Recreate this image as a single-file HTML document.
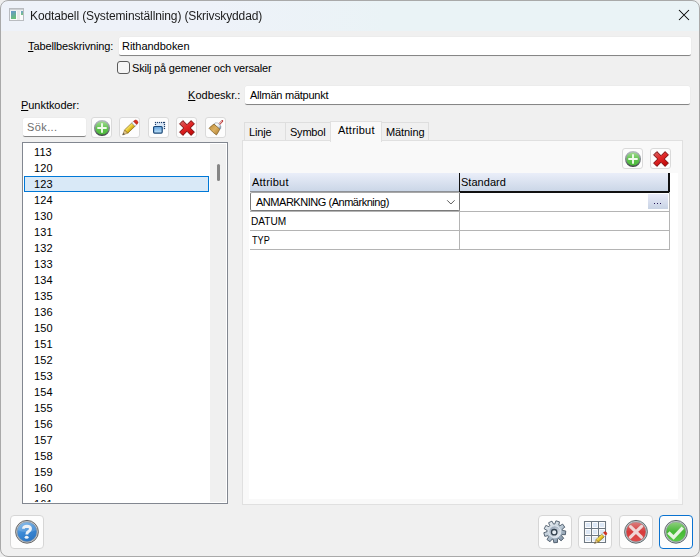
<!DOCTYPE html>
<html><head><meta charset="utf-8">
<style>
*{box-sizing:border-box;margin:0;padding:0}
html,body{width:700px;height:557px;overflow:hidden;background:#eeeeee}
body{font-family:"Liberation Sans",sans-serif;font-size:11px;color:#000;position:relative}
.a{position:absolute}
.t{position:absolute;white-space:pre;line-height:14px;color:#000}
#win{position:absolute;left:0;top:0;width:700px;height:557px;border-radius:8px;background:#f0f0f0;overflow:hidden}
#bord{position:absolute;left:0;top:0;width:700px;height:557px;border:1px solid #a9a9a9;border-radius:8px;pointer-events:none}
#title{position:absolute;left:0;top:0;width:700px;height:31px;background:linear-gradient(90deg,#eef2f9 0%,#eef2f9 30%,#eaf3f6 55%,#eaf3f6 100%)}
.tb{position:absolute;background:#fff;border-radius:2px;border-bottom:1px solid #868686;box-shadow:0 0 0 0.5px #e8e8e8}
.btn{position:absolute;width:21px;height:21px;border:1px solid #dadada;border-radius:3px;background:#fdfdfd}
.bbtn{position:absolute;width:34px;height:34px;border:1px solid #d6d6d6;border-radius:4px;background:#fdfdfd}
.u{text-decoration:underline;text-underline-offset:1px}
.tab{position:absolute;border:1px solid #dedede;border-bottom:none;background:#f0f0f0}
</style></head>
<body>
<svg width="0" height="0" style="position:absolute">
 <defs>
  <linearGradient id="gGreen" x1="0" y1="0" x2="0" y2="1"><stop offset="0" stop-color="#a8dc98"/><stop offset="0.5" stop-color="#62c452"/><stop offset="1" stop-color="#48b836"/></linearGradient>
  <linearGradient id="gRing" x1="0" y1="0" x2="0" y2="1"><stop offset="0" stop-color="#b4bcc0"/><stop offset="0.6" stop-color="#80868c"/><stop offset="1" stop-color="#404448"/></linearGradient>
  <linearGradient id="gRed" x1="0" y1="0" x2="0.6" y2="1"><stop offset="0" stop-color="#d46a6a"/><stop offset="0.5" stop-color="#e02828"/><stop offset="1" stop-color="#c40c0c"/></linearGradient>
  <linearGradient id="gBlue" x1="0" y1="0" x2="0" y2="1"><stop offset="0" stop-color="#5f9fdc"/><stop offset="1" stop-color="#c4e6fb"/></linearGradient>
  <linearGradient id="gHelp" x1="0" y1="0" x2="0" y2="1"><stop offset="0" stop-color="#6aa8e0"/><stop offset="0.5" stop-color="#3b87d2"/><stop offset="1" stop-color="#2c78c6"/></linearGradient>
  <linearGradient id="gCan" x1="0" y1="0" x2="0" y2="1"><stop offset="0" stop-color="#d88080"/><stop offset="0.5" stop-color="#d83a3a"/><stop offset="1" stop-color="#e04c4c"/></linearGradient>
  <linearGradient id="gOk" x1="0" y1="0" x2="0" y2="1"><stop offset="0" stop-color="#90d080"/><stop offset="0.5" stop-color="#46b836"/><stop offset="1" stop-color="#5ace48"/></linearGradient>
  <linearGradient id="gSilver" x1="0" y1="0" x2="1" y2="1"><stop offset="0" stop-color="#e4ecf4"/><stop offset="0.5" stop-color="#a8b8c8"/><stop offset="1" stop-color="#7a8a9a"/></linearGradient>
  <linearGradient id="gBrush" x1="0" y1="0" x2="1" y2="1"><stop offset="0" stop-color="#b88838"/><stop offset="0.5" stop-color="#dcb060"/><stop offset="1" stop-color="#a87830"/></linearGradient>
  <linearGradient id="gPen" x1="0" y1="0" x2="0" y2="1"><stop offset="0" stop-color="#f8e878"/><stop offset="0.5" stop-color="#e8c830"/><stop offset="1" stop-color="#c8a010"/></linearGradient>
  <g id="pencil">
   <path d="M0 0 L5 -2.3 L5 2.3 Z" fill="#e2c58a" stroke="#8a6a28" stroke-width="0.5" stroke-linejoin="round"/>
   <path d="M0 0 L2.2 -1 L2.2 1 Z" fill="#505050"/>
   <rect x="5" y="-2.3" width="10" height="4.6" fill="url(#gPen)" stroke="#7a5c08" stroke-width="0.6"/>
   <rect x="15" y="-2.3" width="2.4" height="4.6" fill="#f6f6f6" stroke="#8898a8" stroke-width="0.5"/>
   <path d="M17.4 -2.3 h0.8 a2.3 2.3 0 0 1 0 4.6 h-0.8 Z" fill="#d83020" stroke="#a01808" stroke-width="0.4"/>
  </g>
 </defs>
</svg>
<div id="win">
<div id="title">
 <svg class="a" style="left:9px;top:8px" width="15" height="13" viewBox="0 0 15 13">
  <defs><linearGradient id="ig" x1="0" y1="0" x2="0.3" y2="1"><stop offset="0" stop-color="#5a8ccc"/><stop offset="1" stop-color="#5db86e"/></linearGradient></defs>
  <rect x="0.5" y="0.5" width="14" height="12" fill="#fbfbfb" stroke="#b9bcc0"/>
  <rect x="1" y="1" width="13" height="1.3" fill="#cdd0d3"/>
  <rect x="2" y="3" width="5" height="8" fill="url(#ig)" opacity="0.92"/>
  <rect x="8" y="3" width="3" height="9" fill="#e9e9e9"/>
  <rect x="12" y="3" width="2" height="4" fill="url(#ig)" opacity="0.85"/>
 </svg>
<div class="t" style="left:30px;top:9px;font-size:12px;letter-spacing:-0.12px;color:#1c1c1c;will-change:transform">Kodtabell (Systeminställning) (Skrivskyddad)</div>
 <svg class="a" style="left:678px;top:9px" width="12" height="12" viewBox="0 0 12 12"><path d="M1 1L11 11M11 1L1 11" stroke="#000" stroke-width="1.05"/></svg>
</div>
<div class="t" style="left:28px;top:39px;font-size:11px;letter-spacing:-0.12px;"><span class="u">T</span>abellbeskrivning:</div>
<div class="tb" style="left:119px;top:37px;width:572px;height:19px"></div>
<div class="t" style="left:122px;top:39px;font-size:11px;letter-spacing:-0.03px;">Rithandboken</div>
<div class="a" style="left:117px;top:61px;width:13px;height:13px;border:1px solid #5a5a5a;border-radius:3px;background:#f5f5f5"></div>
<div class="t" style="left:132px;top:61px;font-size:11px;letter-spacing:-0.19px;">Skilj på gemener och versaler</div>
<div class="t" style="left:188px;top:88px;font-size:11px;letter-spacing:0.05px;"><span class="u">K</span>odbeskr.:</div>
<div class="tb" style="left:245px;top:86px;width:445px;height:19px"></div>
<div class="t" style="left:250px;top:88px;font-size:11px;letter-spacing:-0.24px;">Allmän mätpunkt</div>
<div class="t" style="left:21px;top:98px;font-size:11px;letter-spacing:-0.05px;"><span class="u">P</span>unktkoder:</div>
<div class="tb" style="left:23px;top:118px;width:63px;height:19px"></div>
<div class="t" style="left:27px;top:120px;font-size:11px;letter-spacing:0.4px;color:#6d6d6d">Sök...</div>
<div class="btn" style="left:91px;top:117px"></div><svg class="a" style="left:91px;top:117px" width="21" height="21" viewBox="0 0 21 21"><circle cx="11" cy="11" r="7.3" fill="url(#gGreen)" stroke="url(#gRing)" stroke-width="1.5"/><path d="M6.3 11h9.4M11 6.3v9.4" stroke="#f2fbee" stroke-width="1.9"/></svg>
<div class="btn" style="left:119px;top:117px"></div><svg class="a" style="left:119px;top:117px" width="21" height="21" viewBox="0 0 21 21"><use href="#pencil" transform="translate(3.6 18) rotate(-44)"/></svg>
<div class="btn" style="left:148px;top:117px"></div><svg class="a" style="left:148px;top:117px" width="21" height="21" viewBox="0 0 21 21"><rect x="8" y="6" width="8" height="6.5" fill="#dbe9f8"/><rect x="6.9" y="4.9" width="1.2" height="1.2" fill="#1c3e6c"/><rect x="6.9" y="6.9" width="1.2" height="1.2" fill="#1c3e6c"/><rect x="8.9" y="4.9" width="1.2" height="1.2" fill="#1c3e6c"/><rect x="10.9" y="4.9" width="1.2" height="1.2" fill="#1c3e6c"/><rect x="12.9" y="4.9" width="1.2" height="1.2" fill="#1c3e6c"/><rect x="14.9" y="4.9" width="1.2" height="1.2" fill="#1c3e6c"/><rect x="15.9" y="4.9" width="1.2" height="1.2" fill="#1c3e6c"/><rect x="15.9" y="6.9" width="1.2" height="1.2" fill="#1c3e6c"/><rect x="15.9" y="8.9" width="1.2" height="1.2" fill="#1c3e6c"/><rect x="15.9" y="10.9" width="1.2" height="1.2" fill="#1c3e6c"/><rect x="5.6" y="9.5" width="8.6" height="6.6" rx="1" fill="url(#gBlue)" stroke="#1a4878" stroke-width="1.2"/></svg>
<div class="btn" style="left:176px;top:117px"></div><svg class="a" style="left:176px;top:117px" width="21" height="21" viewBox="0 0 21 21"><path d="M3.6 6.9 L6.9 3.6 L11 7.7 L15.1 3.6 L18.4 6.9 L14.3 11 L18.4 15.1 L15.1 18.4 L11 14.3 L6.9 18.4 L3.6 15.1 L7.7 11 Z" fill="url(#gRed)" stroke="#6a0000" stroke-width="0.9" stroke-linejoin="round"/></svg>
<div class="btn" style="left:205px;top:117px"></div><svg class="a" style="left:205px;top:117px" width="21" height="21" viewBox="0 0 21 21"><defs><linearGradient id="gFer" x1="0" y1="0" x2="1" y2="0.6"><stop offset="0" stop-color="#c8d0d8"/><stop offset="0.4" stop-color="#ffffff"/><stop offset="0.8" stop-color="#d8e0e8"/><stop offset="1" stop-color="#7890a8"/></linearGradient></defs><path d="M13.6 8 L17.2 4.1" stroke="#b83030" stroke-width="2.1" stroke-linecap="round"/><path d="M13.6 8 L17.2 4.1" stroke="#f8eeee" stroke-width="2.1" stroke-dasharray="0.55 0.85"/><path d="M8.8 7.2 L10.2 5.8 L13.2 6.0 L15.9 9.1 L15.7 11.7 L14.8 12.2 Z" fill="url(#gFer)" stroke="#8090a0" stroke-width="0.5" stroke-linejoin="round"/><path d="M4.1 11.3 Q6 8.8 9.0 7.1 L14.8 12.2 Q13.4 15.4 11.4 18.0 Q7.4 15.2 4.1 11.3 Z" fill="url(#gBrush)" stroke="#6a4a10" stroke-width="0.6" stroke-linejoin="round"/></svg>
<div class="a" style="left:22px;top:142px;width:206px;height:362px;border:1px solid #828790;background:#fff;overflow:hidden">
 <div class="a" style="left:187px;top:1px;width:16px;height:358px;background:#f0f0f0"></div>
 <div class="a" style="left:194px;top:21px;width:3px;height:17px;background:#858585;border-radius:1.5px"></div>
 <div class="a" style="left:1px;top:1px;width:186px;height:358px;overflow:hidden">
  <div class="t" style="left:10px;top:1px;font-size:11px;letter-spacing:0.1px;">113</div>
  <div class="t" style="left:10px;top:17px;font-size:11px;letter-spacing:0.1px;">120</div>
  <div class="a" style="left:0px;top:32px;width:185px;height:16px;background:#d9e9f7;border:1px solid #0078d7"></div>
  <div class="t" style="left:10px;top:33px;font-size:11px;letter-spacing:0.1px;">123</div>
  <div class="t" style="left:10px;top:49px;font-size:11px;letter-spacing:0.1px;">124</div>
  <div class="t" style="left:10px;top:65px;font-size:11px;letter-spacing:0.1px;">130</div>
  <div class="t" style="left:10px;top:81px;font-size:11px;letter-spacing:0.1px;">131</div>
  <div class="t" style="left:10px;top:97px;font-size:11px;letter-spacing:0.1px;">132</div>
  <div class="t" style="left:10px;top:113px;font-size:11px;letter-spacing:0.1px;">133</div>
  <div class="t" style="left:10px;top:129px;font-size:11px;letter-spacing:0.1px;">134</div>
  <div class="t" style="left:10px;top:145px;font-size:11px;letter-spacing:0.1px;">135</div>
  <div class="t" style="left:10px;top:161px;font-size:11px;letter-spacing:0.1px;">136</div>
  <div class="t" style="left:10px;top:177px;font-size:11px;letter-spacing:0.1px;">150</div>
  <div class="t" style="left:10px;top:193px;font-size:11px;letter-spacing:0.1px;">151</div>
  <div class="t" style="left:10px;top:209px;font-size:11px;letter-spacing:0.1px;">152</div>
  <div class="t" style="left:10px;top:225px;font-size:11px;letter-spacing:0.1px;">153</div>
  <div class="t" style="left:10px;top:241px;font-size:11px;letter-spacing:0.1px;">154</div>
  <div class="t" style="left:10px;top:257px;font-size:11px;letter-spacing:0.1px;">155</div>
  <div class="t" style="left:10px;top:273px;font-size:11px;letter-spacing:0.1px;">156</div>
  <div class="t" style="left:10px;top:289px;font-size:11px;letter-spacing:0.1px;">157</div>
  <div class="t" style="left:10px;top:305px;font-size:11px;letter-spacing:0.1px;">158</div>
  <div class="t" style="left:10px;top:321px;font-size:11px;letter-spacing:0.1px;">159</div>
  <div class="t" style="left:10px;top:337px;font-size:11px;letter-spacing:0.1px;">160</div>
  <div class="t" style="left:10px;top:353px;font-size:11px;letter-spacing:0.1px;">161</div>
 </div>
</div>
<div class="tab" style="left:244px;top:122px;width:42px;height:19px"></div>
<div class="tab" style="left:285px;top:122px;width:46px;height:19px"></div>
<div class="tab" style="left:381px;top:122px;width:48px;height:19px"></div>
<div class="a" style="left:242px;top:140px;width:441px;height:365px;border:1px solid #e0e0e0;background:#f9f9f9"></div>
<div class="tab" style="left:330px;top:121px;width:52px;height:21px;background:#f9f9f9;border-color:#e0e0e0"></div>
<div class="t" style="left:249px;top:125px;font-size:11px;letter-spacing:-0.15px;">Linje</div>
<div class="t" style="left:290px;top:125px;font-size:11px;letter-spacing:-0.22px;">Symbol</div>
<div class="t" style="left:338px;top:123px;font-size:11px;letter-spacing:0.24px;">Attribut</div>
<div class="t" style="left:386px;top:125px;font-size:11px;letter-spacing:-0.1px;">Mätning</div>
<div class="btn" style="left:622px;top:148px"></div><svg class="a" style="left:622px;top:148px" width="21" height="21" viewBox="0 0 21 21"><circle cx="11" cy="11" r="7.3" fill="url(#gGreen)" stroke="url(#gRing)" stroke-width="1.5"/><path d="M6.3 11h9.4M11 6.3v9.4" stroke="#f2fbee" stroke-width="1.9"/></svg>
<div class="btn" style="left:650px;top:148px"></div><svg class="a" style="left:650px;top:148px" width="21" height="21" viewBox="0 0 21 21"><path d="M3.6 6.9 L6.9 3.6 L11 7.7 L15.1 3.6 L18.4 6.9 L14.3 11 L18.4 15.1 L15.1 18.4 L11 14.3 L6.9 18.4 L3.6 15.1 L7.7 11 Z" fill="url(#gRed)" stroke="#6a0000" stroke-width="0.9" stroke-linejoin="round"/></svg>
<div class="a" style="left:249px;top:173px;width:429px;height:326px;background:#fff"></div>
<div class="a" style="left:250px;top:173px;width:420px;height:19px;background:linear-gradient(#eaeef9,#c9d5e6)"></div>
<div class="a" style="left:459px;top:173px;width:1px;height:19px;background:#111"></div>
<div class="a" style="left:668px;top:173px;width:2px;height:19px;background:#111"></div>
<div class="a" style="left:460px;top:191px;width:210px;height:2px;background:#111"></div>
<div class="a" style="left:250px;top:191px;width:209px;height:1px;background:#8e9298"></div>
<div class="a" style="left:250px;top:211px;width:420px;height:1px;background:#b4b4b4"></div>
<div class="a" style="left:250px;top:230px;width:420px;height:1px;background:#b4b4b4"></div>
<div class="a" style="left:250px;top:249px;width:420px;height:1px;background:#b4b4b4"></div>
<div class="a" style="left:459px;top:192px;width:1px;height:58px;background:#b4b4b4"></div>
<div class="a" style="left:669px;top:192px;width:1px;height:58px;background:#b4b4b4"></div>
<div class="a" style="left:250px;top:192px;width:210px;height:19px;background:#fff;border:1px solid #7a7a7a;border-top-color:#a8a8a8;border-radius:2px"></div>
<svg class="a" style="left:446px;top:199px" width="10" height="7" viewBox="0 0 10 7"><path d="M1.2 1.3L4.9 5L8.6 1.3" fill="none" stroke="#5a5a5a" stroke-width="1"/></svg>
<div class="a" style="left:648px;top:194px;width:20px;height:15px;background:linear-gradient(#e9ebf9,#c8d3e4)"></div>
<div class="t" style="left:252px;top:175px;font-size:11px;letter-spacing:0.24px;">Attribut</div>
<div class="t" style="left:461px;top:175px;font-size:11px;letter-spacing:0.03px;">Standard</div>
<div class="t" style="left:256px;top:195px;font-size:11px;letter-spacing:-0.47px;">ANMARKNING (Anmärkning)</div>
<div class="t" style="left:251px;top:214px;font-size:11px;letter-spacing:0px;transform:scaleX(0.92);transform-origin:0 0">DATUM</div>
<div class="t" style="left:252px;top:233px;font-size:11px;letter-spacing:0px;transform:scaleX(0.83);transform-origin:0 0">TYP</div>
<div class="a" style="left:654px;top:203px;width:1px;height:1px;background:#2a1a5a"></div><div class="a" style="left:657px;top:203px;width:1px;height:1px;background:#2a1a5a"></div><div class="a" style="left:660px;top:203px;width:1px;height:1px;background:#2a1a5a"></div><div class="bbtn" style="left:10px;top:515px"></div><svg class="a" style="left:10px;top:515px" width="34" height="34" viewBox="0 0 34 34"><defs><linearGradient id="gH2" x1="0.2" y1="0" x2="0.7" y2="1"><stop offset="0" stop-color="#78b4e8"/><stop offset="0.45" stop-color="#3c8ad6"/><stop offset="1" stop-color="#2a74c2"/></linearGradient></defs><circle cx="17" cy="16.8" r="11.4" fill="#c4c8cc" stroke="#5a5a5a" stroke-width="0.9"/><circle cx="17" cy="16.8" r="9.9" fill="url(#gH2)" stroke="#8a9098" stroke-width="0.5"/><path d="M7.6 15 A9.6 9.6 0 0 1 26.4 15 Q17 19.5 7.6 15Z" fill="#fff" opacity="0.15"/><path d="M13.5 13.8 Q13.4 11.3 17 11.3 Q20.6 11.4 20.5 13.9 Q20.4 15.6 18.4 16.6 Q16.9 17.4 16.9 19 L16.9 19.6" fill="none" stroke="#eef2f6" stroke-width="2.9"/><ellipse cx="16.6" cy="22.2" rx="2" ry="1.55" fill="#eef2f6"/></svg>
<div class="bbtn" style="left:538px;top:515px"></div><svg class="a" style="left:538px;top:515px" width="34" height="34" viewBox="0 0 34 34"><defs><linearGradient id="gG1" x1="0.1" y1="0" x2="0.8" y2="1"><stop offset="0" stop-color="#f4f7fa"/><stop offset="0.5" stop-color="#bccad6"/><stop offset="1" stop-color="#7a8ca0"/></linearGradient><linearGradient id="gG2" x1="0.9" y1="1" x2="0.1" y2="0"><stop offset="0" stop-color="#f4f8fc"/><stop offset="1" stop-color="#8898ac"/></linearGradient></defs><path d="M16.80 9.00 L17.90 5.85 L21.49 6.85 L20.81 10.11 L21.81 10.82 L24.68 9.12 L26.79 12.19 L24.17 14.25 L24.48 15.45 L27.77 15.98 L27.41 19.69 L24.08 19.59 L23.55 20.70 L25.73 23.22 L23.08 25.83 L20.59 23.62 L19.47 24.13 L19.51 27.46 L15.80 27.75 L15.32 24.46 L14.13 24.13 L12.02 26.71 L8.99 24.55 L10.74 21.72 L10.05 20.70 L6.77 21.32 L5.84 17.72 L9.00 16.67 L9.12 15.45 L6.21 13.82 L7.81 10.46 L10.91 11.69 L11.79 10.82 L10.61 7.71 L13.99 6.16 L15.57 9.10 Z" fill="url(#gG1)" stroke="#4a5868" stroke-width="0.9" stroke-linejoin="round"/><circle cx="16.8" cy="16.8" r="6" fill="url(#gG2)" stroke="#dfe7ef" stroke-width="1"/><circle cx="16.2" cy="17.2" r="2.7" fill="#e8eef4" stroke="#34424f" stroke-width="1.3"/></svg>
<div class="bbtn" style="left:578px;top:515px"></div><svg class="a" style="left:578px;top:515px" width="34" height="34" viewBox="0 0 34 34"><rect x="8" y="8" width="4" height="4" fill="#dde8f6"/><rect x="8" y="15" width="4" height="4" fill="#dde8f6"/><rect x="8" y="22" width="4" height="4" fill="#dde8f6"/><rect x="15" y="8" width="4" height="4" fill="#dde8f6"/><rect x="15" y="15" width="4" height="4" fill="#dde8f6"/><rect x="15" y="22" width="4" height="4" fill="#dde8f6"/><rect x="22" y="8" width="4" height="4" fill="#dde8f6"/><rect x="22" y="15" width="4" height="4" fill="#dde8f6"/><rect x="22" y="22" width="4" height="4" fill="#dde8f6"/><path d="M6.5 6.5h21v21h-21Z M13.5 6.5v21 M20.5 6.5v21 M6.5 13.5h21 M6.5 20.5h21" fill="none" stroke="#6e7882" stroke-width="1.1"/><use href="#pencil" transform="translate(16.4 28.5) rotate(-43) scale(0.8)"/></svg>
<div class="bbtn" style="left:619px;top:515px"></div><svg class="a" style="left:619px;top:515px" width="34" height="34" viewBox="0 0 34 34"><circle cx="17" cy="16.8" r="11.4" fill="#c0ccd0" stroke="#545c60" stroke-width="0.9"/><circle cx="17" cy="16.8" r="9.9" fill="url(#gCan)" stroke="#8a8a90" stroke-width="0.5"/><path d="M11.6 11.6 L22.4 22.2 M22.6 11.4 L11.4 22.2" stroke="#f0d6d6" stroke-width="3.2" stroke-linecap="round"/></svg>
<div class="bbtn" style="left:659px;top:515px;border:1px solid #0a72d0"></div><svg class="a" style="left:659px;top:515px" width="34" height="34" viewBox="0 0 34 34"><circle cx="17" cy="16.8" r="11.4" fill="#c4ccd0" stroke="#545c60" stroke-width="0.9"/><circle cx="17" cy="16.8" r="9.9" fill="url(#gOk)" stroke="#8a9090" stroke-width="0.5"/><path d="M9.4 17.4 L14.6 22.4 L23.8 12.6" fill="none" stroke="#e6f4e2" stroke-width="3.4"/></svg>
</div>
<div id="bord"></div>
</body></html>
